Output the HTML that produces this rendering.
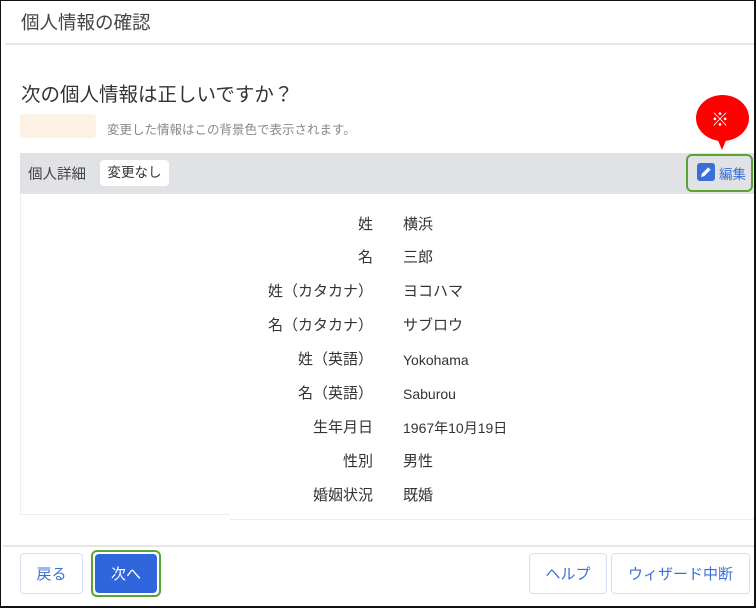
<!DOCTYPE html>
<html><head><meta charset="utf-8"><style>
*{box-sizing:border-box;margin:0;padding:0}
body{width:756px;height:608px;background:#fff;font-family:"Liberation Sans","Noto Sans CJK JP",sans-serif;position:relative;overflow:hidden;color:#333}
.frame{position:absolute;left:0;top:0;width:756px;height:608px;border:2px solid #111;border-left-width:1px;border-top-width:1px}
.abs{position:absolute}
.row{position:absolute;left:0;width:756px;height:20px;font-size:15px;line-height:20px;color:#333}
.row .l{position:absolute;top:0;right:383px;text-align:right;white-space:nowrap}
.row .v{position:absolute;top:0;left:403px;white-space:nowrap}
.row .v.e{font-size:14px;top:0}
.btn{position:absolute;top:553px;height:41px;border:1px solid #d5e0f5;border-radius:4px;color:#3b6fd6;font-size:15px;display:flex;align-items:center;justify-content:center;background:#fff}
</style></head><body>
<div class="abs" style="left:21px;top:9px;font-size:18.5px;color:#444">個人情報の確認</div>
<div class="abs" style="left:5px;top:43px;width:750px;height:2px;background:#e6e6e6"></div>
<div class="abs" style="left:21px;top:78px;font-size:19.5px;color:#333">次の個人情報は正しいですか？</div>
<div class="abs" style="left:20px;top:114px;width:76px;height:24px;background:#fdf0e4;border-radius:4px"></div>
<div class="abs" style="left:107px;top:119px;font-size:12.5px;color:#888">変更した情報はこの背景色で表示されます。</div>
<div class="abs" style="left:20px;top:153px;width:734px;height:41px;background:#e1e2e6"></div>
<div class="abs" style="left:28px;top:163px;font-size:14.5px;color:#444">個人詳細</div>
<div class="abs" style="left:100px;top:160px;width:69px;height:26px;background:#fff;border-radius:4px;font-size:13.5px;color:#333;text-align:center;line-height:26px">変更なし</div>
<div class="abs" style="left:686px;top:154px;width:67px;height:38px;border:2.5px solid #5aa532;border-radius:6px"></div>
<div class="abs" style="left:697px;top:163px;width:18px;height:18px;background:#3b6fd6;border-radius:3px">
<svg width="18" height="18" viewBox="0 0 18 18"><path d="M4 14l0.8-3.2 6.4-6.4 2.4 2.4-6.4 6.4z" fill="#fff"/></svg></div>
<div class="abs" style="left:719px;top:163px;font-size:13.5px;color:#3b6fd6">編集</div>
<div class="abs" style="left:696px;top:95px;width:53px;height:46px;background:#f00;border-radius:50%"></div>
<div class="abs" style="left:717px;top:138px;width:0;height:0;border-left:5px solid transparent;border-right:5px solid transparent;border-top:12px solid #f00"></div>
<div class="abs" style="left:711px;top:106px;font-size:18px;color:#fff">※</div>
<div class="abs" style="left:20px;top:194px;width:1px;height:320px;background:#eee"></div>
<div class="abs" style="left:20px;top:514px;width:210px;height:1px;background:#eee"></div>
<div class="abs" style="left:230px;top:519px;width:524px;height:1px;background:#eee"></div>
<div class="row" style="top:215px"><span class="l">姓</span><span class="v">横浜</span></div>
<div class="row" style="top:248px"><span class="l">名</span><span class="v">三郎</span></div>
<div class="row" style="top:282px"><span class="l">姓（カタカナ）</span><span class="v">ヨコハマ</span></div>
<div class="row" style="top:316px"><span class="l">名（カタカナ）</span><span class="v">サブロウ</span></div>
<div class="row" style="top:350px"><span class="l">姓（英語）</span><span class="v e">Yokohama</span></div>
<div class="row" style="top:384px"><span class="l">名（英語）</span><span class="v e">Saburou</span></div>
<div class="row" style="top:418px"><span class="l">生年月日</span><span class="v" style="font-size:14px">1967年10月19日</span></div>
<div class="row" style="top:452px"><span class="l">性別</span><span class="v">男性</span></div>
<div class="row" style="top:486px"><span class="l">婚姻状況</span><span class="v">既婚</span></div>
<div class="abs" style="left:3px;top:545px;width:752px;height:2px;background:#e6e6e6"></div>
<div class="btn" style="left:20px;width:63px">戻る</div>
<div class="abs" style="left:91px;top:550px;width:70px;height:47px;border:2.5px solid #5aa532;border-radius:6px"></div>
<div class="btn" style="left:95px;width:62px;top:554px;height:39px;background:#2f66dc;color:#fff;border:none">次へ</div>
<div class="btn" style="left:529px;width:78px">ヘルプ</div>
<div class="btn" style="left:611px;width:139px">ウィザード中断</div>
<div class="frame"></div>
</body></html>
